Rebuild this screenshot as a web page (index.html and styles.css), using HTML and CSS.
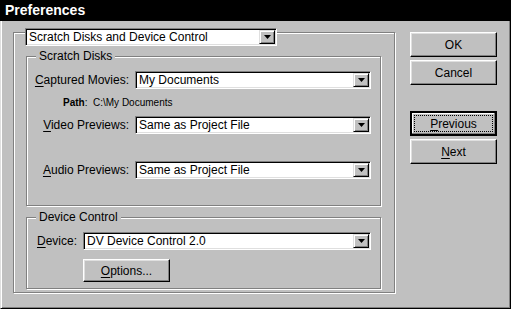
FILE: index.html
```html
<!DOCTYPE html>
<html lang="en">
<head>
    <meta charset="UTF-8">
    <title>Preferences</title>
    <link rel="stylesheet" href="styles.css">
</head>
<body>
    <div class="window">
        <div class="titlebar">Preferences</div>
        <div class="frame">
            <div class="outer">
                <div class="combo top-combo">
                    <span class="combo-text">Scratch Disks and Device Control</span>
                    <span class="combo-btn"><svg width="7" height="4" viewBox="0 0 7 4"><polygon points="0,0 7,0 3.5,4" fill="#000"/></svg></span>
                </div>

                <div class="group scratch">
                    <div class="legend">Scratch Disks</div>
                    <div class="row">
                        <label><u>C</u>aptured Movies:</label>
                        <div class="combo">
                            <span class="combo-text">My Documents</span>
                            <span class="combo-btn"><svg width="7" height="4" viewBox="0 0 7 4"><polygon points="0,0 7,0 3.5,4" fill="#000"/></svg></span>
                        </div>
                    </div>
                    <div class="path"><b>Path</b>:&nbsp; C:&#92;My Documents</div>
                    <div class="row">
                        <label><u>V</u>ideo Previews:</label>
                        <div class="combo">
                            <span class="combo-text">Same as Project File</span>
                            <span class="combo-btn"><svg width="7" height="4" viewBox="0 0 7 4"><polygon points="0,0 7,0 3.5,4" fill="#000"/></svg></span>
                        </div>
                    </div>
                    <div class="row audio">
                        <label><u>A</u>udio Previews:</label>
                        <div class="combo">
                            <span class="combo-text">Same as Project File</span>
                            <span class="combo-btn"><svg width="7" height="4" viewBox="0 0 7 4"><polygon points="0,0 7,0 3.5,4" fill="#000"/></svg></span>
                        </div>
                    </div>
                </div>

                <div class="group device">
                    <div class="legend">Device Control</div>
                    <div class="row device-row">
                        <label><u>D</u>evice:</label>
                        <div class="combo">
                            <span class="combo-text">DV Device Control 2.0</span>
                            <span class="combo-btn"><svg width="7" height="4" viewBox="0 0 7 4"><polygon points="0,0 7,0 3.5,4" fill="#000"/></svg></span>
                        </div>
                    </div>
                    <button class="btn options"><u>O</u>ptions...</button>
                </div>
            </div>

            <div class="buttons">
                <button class="btn">OK</button>
                <button class="btn">Cancel</button>
                <button class="btn default"><span class="focus"><u>P</u>revious</span></button>
                <button class="btn"><u>N</u>ext</button>
            </div>
        </div>
    </div>
</body>
</html>
```

FILE: styles.css
```css
body {
    margin: 0;
    font-family: 'Liberation Sans', Arial, sans-serif;
    font-size: 12px; color: #000;
}
u { text-decoration: underline; text-underline-offset: 2px; }
.window { width: 511px; height: 309px; display: flex; flex-direction: column; background: #c0c0c0; }
.titlebar {
    height: 21px; line-height: 21px; background: #000; color: #fff;
    font-weight: bold; font-size: 14px; padding-left: 5px;
}
.frame {
    flex: 1; display: flex; align-items: flex-start;
    border: 1px solid; border-color: transparent #000 #000 #dfdfdf; border-top: none;
    box-shadow: inset 1px 0 #fff, inset -1px -1px #808080;
}

/* etched boxes */
.outer, .group {
    box-sizing: border-box; border: 1px solid #808080;
    box-shadow: inset 1px 1px #fff, 1px 1px #fff;
}
.outer { margin: 11px 0 0 12px; width: 382px; height: 261px; padding-left: 12px; }
.group { width: 355px; padding-left: 5px; }
.scratch { margin-top: 10px; height: 150px; }
.device { margin-top: 11px; height: 72px; }
.legend {
    width: fit-content; margin: -8px 0 0 4px; padding: 0 3px;
    line-height: 15px; background: #c0c0c0;
}

/* combo boxes */
.combo {
    display: flex; height: 18px; box-sizing: border-box; background: #fff;
    border: 1px solid; border-color: #808080 #fff #fff #808080;
    box-shadow: inset 1px 1px #000, inset -1px -1px #dfdfdf;
}
.combo-text { flex: 1; line-height: 16px; padding-left: 3px; white-space: nowrap; }
.combo-btn {
    width: 16px; height: 14px; margin: 1px; box-sizing: border-box; background: #c0c0c0;
    border: 1px solid; border-color: #dfdfdf #000 #000 #dfdfdf;
    box-shadow: inset 1px 1px #fff, inset -1px -1px #808080;
    display: flex; align-items: center; justify-content: center;
}
.top-combo { width: 252px; margin: -5px 0 0 -1px; }

/* rows */
.row { display: grid; grid-template-columns: 97px 236px; column-gap: 6px; align-items: center; margin-top: 7px; }
.row label { text-align: right; white-space: nowrap; }
.row.audio { margin-top: 27px; }
.path { margin: 8px 0 0 31px; font-size: 10px; line-height: 12px; }
.device-row { grid-template-columns: 45px 288px; }

/* buttons */
.btn {
    display: block; width: 87px; height: 25px; padding: 0; box-sizing: border-box;
    font: inherit; color: #000; background: #c0c0c0;
    border: 1px solid; border-color: #fff #000 #000 #fff;
    box-shadow: inset -1px -1px #808080, inset 1px 1px #dfdfdf;
}
.options { height: 23px; margin: 9px 0 0 51px; }
.buttons { margin: 11px 0 0 15px; display: flex; flex-direction: column; gap: 3px; }
.btn.default {
    margin-top: 23px; border: 2px solid #000;
    box-shadow: inset -1px -1px #808080, inset 1px 1px #fff;
    display: flex; padding: 2px;
}
.focus {
    flex: 1; display: flex; align-items: center; justify-content: center;
    border: 1px dotted #000;
}
```
